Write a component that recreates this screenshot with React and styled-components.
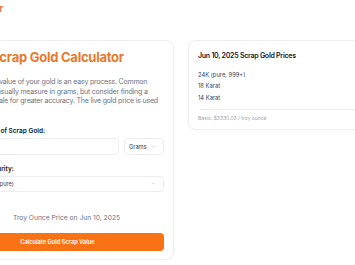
import styled, { createGlobalStyle } from 'styled-components';

const GlobalStyle = createGlobalStyle`
  html, body {
    margin: 0;
    padding: 0;
    background: #ffffff;
    overflow: hidden;
  }
  body {
    font-family: Inter, "Noto Sans", sans-serif;
    color: #111827;
  }
`;

const Page = styled.div`
  width: 640px;
  margin-left: -59px;
`;

const Header = styled.header`
  display: flex;
  justify-content: flex-end;
  align-items: center;
  width: 62px;
  height: 16px;
`;

const Brand = styled.div`
  flex: none;
  font-size: 10.5px;
  font-weight: 700;
  letter-spacing: -0.3px;
  color: #ea7a2c;
  white-space: nowrap;
`;

const Main = styled.main`
  display: flex;
  align-items: flex-start;
  gap: 14px;
  padding-top: 24px;
`;

const Card = styled.section`
  box-sizing: border-box;
  width: ${p => p.$width}px;
  border: 1px solid #eceef0;
  border-radius: 8px;
  box-shadow: 0 1px 3px rgba(0, 0, 0, 0.03);
  padding: ${p => p.$pad};
`;

const Title = styled.h1`
  margin: 0;
  font-size: 13px;
  line-height: 16px;
  font-weight: 700;
  letter-spacing: -0.25px;
  text-align: center;
  color: #e8792b;
`;

const Intro = styled.p`
  margin: 12px 0 0;
  font-size: 7px;
  line-height: 9.7px;
  letter-spacing: -0.2px;
  color: #6b7280;
  white-space: nowrap;
`;

const Field = styled.div`
  margin-top: ${p => p.$top}px;
`;

const Label = styled.label`
  display: block;
  font-size: 6.5px;
  line-height: 8px;
  font-weight: 600;
  color: #111827;
  margin-bottom: 3px;
`;

const Row = styled.div`
  display: flex;
  gap: 5px;
`;

const Box = styled.div`
  box-sizing: border-box;
  flex: ${p => (p.$fixed ? '0 0 40px' : '1')};
  height: 16.5px;
  border: 1px solid #eceef1;
  border-radius: 4px;
  display: flex;
  align-items: center;
  justify-content: space-between;
  padding: 0 7px 0 ${p => (p.$fixed ? 4 : 7)}px;
  font-size: 5.7px;
  color: #374151;
  white-space: nowrap;
`;

const Chevron = () => (
  <svg width="5" height="5" viewBox="0 0 24 24" fill="none" stroke="#9ca3af" strokeWidth="2" strokeLinecap="round" strokeLinejoin="round">
    <path d="m6 9 6 6 6-6" />
  </svg>
);

const Note = styled.div`
  margin-top: 22px;
  padding-left: 18px;
  text-align: center;
  font-size: 6.7px;
  line-height: 9px;
  color: #6b7280;
`;

const Button = styled.button`
  display: block;
  width: 100%;
  margin-top: 9.5px;
  height: 18px;
  border: none;
  border-radius: 4px;
  background: #f97316;
  color: #ffffff;
  font-family: inherit;
  font-size: 5.7px;
  font-weight: 600;
  padding: 0;
  cursor: pointer;
`;

const SideTitle = styled.h2`
  margin: 0;
  font-size: 7px;
  line-height: 10px;
  font-weight: 600;
  letter-spacing: -0.25px;
  color: #111827;
`;

const PriceList = styled.ul`
  list-style: none;
  margin: 7.5px 0 0;
  padding: 0;
`;

const PriceItem = styled.li`
  font-size: 5.8px;
  line-height: 11.7px;
  color: #374151;
`;

const Divider = styled.hr`
  border: none;
  border-top: 1px solid #eceef1;
  margin: 5.5px 0 5.2px 2px;
`;

const Basis = styled.div`
  font-size: 5px;
  line-height: 6px;
  color: #9ca3af;
`;

const App = () => {
  return (
    <>
      <GlobalStyle />
      <Page>
        <Header>
          <Brand>Gold Calculator</Brand>
        </Header>
        <Main>
          <Card $width={233} $pad="8px 9px 8px 9px">
            <Title>Scrap Gold Calculator</Title>
            <Intro>
              Calculating the value of your gold is an easy process. Common
              <br />
              jewelry scales usually measure in grams, but consider finding a
              <br />
              a troy ounce scale for greater accuracy. The live gold price is used
            </Intro>
            <Field $top={21}>
              <Label>Current Weight of Scrap Gold:</Label>
              <Row>
                <Box />
                <Box $fixed>
                  Grams
                  <Chevron />
                </Box>
              </Row>
            </Field>
            <Field $top={10}>
              <Label>Choose Gold Purity:</Label>
              <Box>
                24 Karat Gold (pure)
                <Chevron />
              </Box>
            </Field>
            <Note>Troy Ounce Price on Jun 10, 2025</Note>
            <Button>Calculate Gold Scrap Value</Button>
          </Card>
          <Card $width={220} $pad="10px 10px 7.7px 9px">
            <SideTitle>Jun 10, 2025 Scrap Gold Prices</SideTitle>
            <PriceList>
              <PriceItem>24K (pure, 999+)</PriceItem>
              <PriceItem>18 Karat</PriceItem>
              <PriceItem>14 Karat</PriceItem>
            </PriceList>
            <Divider />
            <Basis>Basic: $3330.03 / troy ounce</Basis>
          </Card>
        </Main>
      </Page>
    </>
  );
};

export default App;
